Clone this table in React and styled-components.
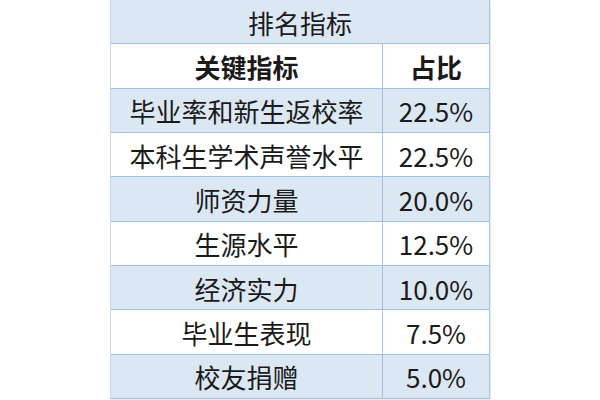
import React from 'react';
import styled, { createGlobalStyle } from 'styled-components';

const GlobalStyle = createGlobalStyle`
  html, body {
    margin: 0;
    padding: 0;
    background: #ffffff;
  }
  body {
    font-family: "Noto Sans CJK SC", "Noto Sans", sans-serif;
    color: #1a1a1a;
  }
`;

const Page = styled.div`
  width: 600px;
  height: 400px;
  display: flex;
  justify-content: center;
  background: #ffffff;
`;

const Table = styled.div`
  width: 378px;
  height: 399px;
  display: grid;
  grid-template-columns: 272px 1fr;
  grid-template-rows: repeat(9, 1fr);
  border-left: 1px solid #c9d6e4;
  border-right: 1px solid #a9c3e2;
  box-shadow: 1px 1px 1px rgba(0, 0, 0, 0.08);
`;

const Cell = styled.div`
  display: flex;
  align-items: center;
  justify-content: center;
  background: ${p => (p.$shaded ? '#dce7f4' : '#ffffff')};
  border-bottom: 1px solid #a3c0e3;
  border-right: ${p => (p.$divider ? '1px solid #a3c0e3' : 'none')};
  font-size: 26px;
  font-weight: ${p => (p.$bold ? 700 : 400)};
  line-height: 1;
  padding-top: 2px;
  color: #1a1a1a;
`;

const Title = styled(Cell)`
  grid-column: 1 / span 2;
`;

const rows = [
  ['毕业率和新生返校率', '22.5%'],
  ['本科生学术声誉水平', '22.5%'],
  ['师资力量', '20.0%'],
  ['生源水平', '12.5%'],
  ['经济实力', '10.0%'],
  ['毕业生表现', '7.5%'],
  ['校友捐赠', '5.0%'],
];

export default function App() {
  return (
    <>
      <GlobalStyle />
      <Page>
        <Table>
          <Title $shaded>排名指标</Title>
          <Cell $divider $bold>关键指标</Cell>
          <Cell $bold>占比</Cell>
          {rows.map(([name, share], i) => (
            <React.Fragment key={name}>
              <Cell $divider $shaded={i % 2 === 0}>{name}</Cell>
              <Cell $shaded={i % 2 === 0}>{share}</Cell>
            </React.Fragment>
          ))}
        </Table>
      </Page>
    </>
  );
}
